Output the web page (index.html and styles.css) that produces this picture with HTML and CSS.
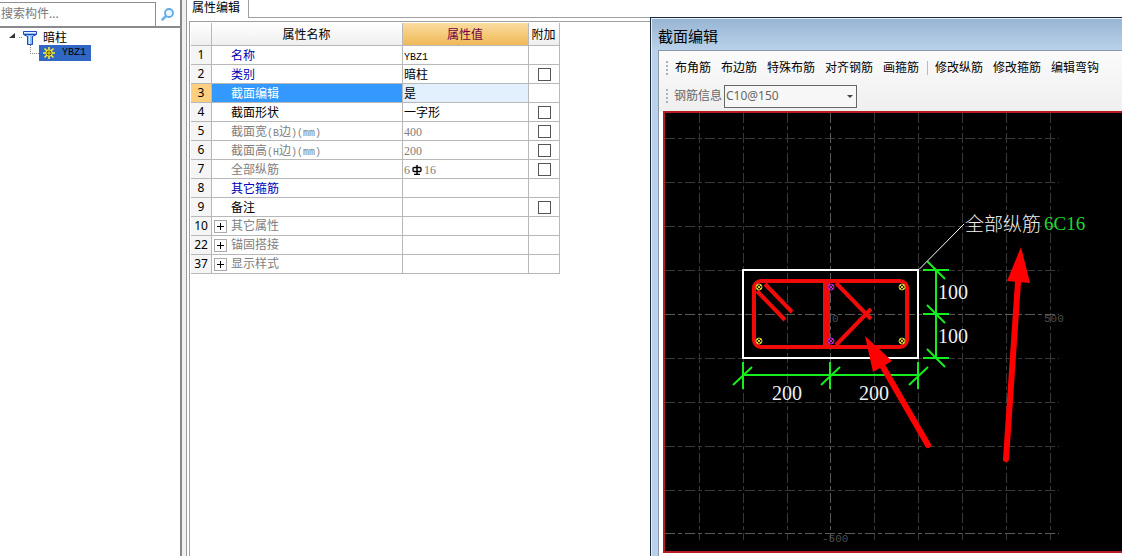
FILE: index.html
```html
<!DOCTYPE html>
<html lang="zh-CN">
<head>
<meta charset="utf-8">
<title>属性编辑</title>
<link rel="stylesheet" href="styles.css">
</head>
<body>
<div class="app">
  <aside class="sidebar">
    <form class="search">
      <input class="search-input" type="text" placeholder="搜索构件..." aria-label="搜索构件">
      <button class="search-button" type="button" aria-label="搜索">
        <svg width="16" height="16" viewBox="0 0 16 16"><path d="M6 10L2.500 13.500" stroke="#6fb4ea" stroke-width="2.600" stroke-linecap="round"/><circle cx="9" cy="7" r="4" fill="#eaf6ff" stroke="#62a9e6" stroke-width="1.800"/></svg>
      </button>
    </form>
    <div class="tree" role="tree">
      <div class="node" role="treeitem">
        <svg width="34" height="16" viewBox="0 0 34 16"><path d="M6 4v5H0z" fill="#333"/><path d="M10 8.500h3" stroke="#888" stroke-dasharray="1 1"/><path d="M14.500 2.500h13v3l-4 2v8h-5v-8l-4-2z" fill="#8fbdf5" stroke="#2348b8"/><path d="M15 3.500h12M20.500 7v8" stroke="#e8f3ff"/><path d="M15 5.500h12" stroke="#2348b8"/></svg>
        <span class="node-text">暗柱</span>
      </div>
      <div class="node child" role="treeitem" aria-selected="true">
        <svg class="branch" width="10" height="16" viewBox="0 0 10 16"><path d="M1.500 0v8M1 8.500h9" fill="none" stroke="#888" stroke-dasharray="1 1"/></svg>
        <span class="selected"><svg width="12" height="12" viewBox="0 0 12 12"><path d="M6 0v12M0 6h12M1.500 1.500l9 9M10.500 1.500l-9 9" stroke="#ffef2a" stroke-width="1.500"/><circle cx="6" cy="6" r="3.500" fill="#ffef2a"/><circle cx="6" cy="6" r="2.500" fill="#34340c"/><path d="M6 4v4M4 6h4" stroke="#ffef2a"/></svg><span class="code">YBZ1</span></span>
      </div>
    </div>
  </aside>
  <div class="splitter"></div>
  <main class="main">
    <div class="tabs"><button class="tab" type="button">属性编辑</button></div>
    <div class="sheet">
      <table class="props">
        <colgroup><col class="c-num"><col class="c-name"><col class="c-value"><col class="c-extra"></colgroup>
        <thead><tr><th></th><th>属性名称</th><th class="active">属性值</th><th>附加</th></tr></thead>
        <tbody>
          <tr><th>1</th><td class="name blue">名称</td><td><span class="code">YBZ1</span></td><td></td></tr>
          <tr><th>2</th><td class="name blue">类别</td><td>暗柱</td><td class="check"><input type="checkbox" aria-label="附加 类别"></td></tr>
          <tr class="current"><th>3</th><td class="name">截面编辑</td><td class="value">是</td><td></td></tr>
          <tr><th>4</th><td class="name">截面形状</td><td>一字形</td><td class="check"><input type="checkbox" aria-label="附加 截面形状"></td></tr>
          <tr class="muted"><th>5</th><td class="name">截面宽<span class="code">(B</span>边<span class="code">)(mm)</span></td><td><span class="digits">400</span></td><td class="check"><input type="checkbox" aria-label="附加 截面宽"></td></tr>
          <tr class="muted"><th>6</th><td class="name">截面高<span class="code">(H</span>边<span class="code">)(mm)</span></td><td><span class="digits">200</span></td><td class="check"><input type="checkbox" aria-label="附加 截面高"></td></tr>
          <tr class="muted"><th>7</th><td class="name">全部纵筋</td><td><span class="digits">6</span><svg class="bar" width="10" height="10" viewBox="0 0 10 10"><path d="M5 0v10M2 9.500h6" stroke="#000" stroke-width="1.500"/><rect x="1" y="2.500" width="8" height="4" rx="1" fill="none" stroke="#000" stroke-width="1.300"/></svg><span class="digits">16</span></td><td class="check"><input type="checkbox" aria-label="附加 全部纵筋"></td></tr>
          <tr><th>8</th><td class="name blue">其它箍筋</td><td></td><td></td></tr>
          <tr><th>9</th><td class="name">备注</td><td></td><td class="check"><input type="checkbox" aria-label="附加 备注"></td></tr>
          <tr class="muted"><th>10</th><td class="group"><button class="expand" type="button" aria-label="展开 其它属性"></button>其它属性</td><td></td><td></td></tr>
          <tr class="muted"><th>22</th><td class="group"><button class="expand" type="button" aria-label="展开 锚固搭接"></button>锚固搭接</td><td></td><td></td></tr>
          <tr class="muted"><th>37</th><td class="group"><button class="expand" type="button" aria-label="展开 显示样式"></button>显示样式</td><td></td><td></td></tr>
        </tbody>
      </table>
    </div>
  </main>

  <section class="window">
    <h1 class="title">截面编辑</h1>
    <div class="client">
      <div class="toolbar">
        <i class="grip"></i>
        <button type="button">布角筋</button>
        <button type="button">布边筋</button>
        <button type="button">特殊布筋</button>
        <button type="button">对齐钢筋</button>
        <button type="button">画箍筋</button>
        <i class="divider"></i>
        <button type="button">修改纵筋</button>
        <button type="button">修改箍筋</button>
        <button type="button">编辑弯钩</button>
      </div>
      <div class="toolbar info">
        <i class="grip"></i>
        <label for="rebar">钢筋信息</label>
        <span class="combo"><select id="rebar"><option>C10@150</option></select></span>
      </div>
      <div class="canvas">
        <svg class="drawing" viewBox="665 113 457 438" preserveAspectRatio="xMinYMin meet">
          <g class="grid">
            <path d="M699.500 113v427M743.500 113v427M787.500 113v427M874.500 113v427M918.500 113v427M962.500 113v427M1006.500 113v427M1050.500 113v427"/>
            <path d="M665 138.500h394M665 182.500h394M665 226.500h394M665 270.500h394M665 358.500h394M665 402.500h394M665 446.500h394M665 490.500h394"/>
            <path class="axis" d="M830.500 113v427M665 314.500h394M665 533.500h394"/>
          </g>
          <g class="scale"><text x="832" y="322">0</text><text x="1044" y="322">500</text><text x="822" y="542">-500</text></g>
          <rect class="outline" x="743" y="270" width="175" height="88"/>
          <path class="leader" d="M919 269.500L964 224"/>
          <g class="stirrup">
            <rect x="754" y="281" width="153" height="66" rx="7"/>
            <path d="M825 283v62M828 283v62"/>
            <path d="M757 291l28 29M765 284l27 28M836 283l35 36M836 345l35-36"/>
          </g>
          <g class="bars">
            <g stroke="#d8d030"><circle cx="759" cy="287" r="3"/><circle cx="902" cy="287" r="3"/><circle cx="759" cy="341" r="3"/><circle cx="902" cy="341" r="3"/><path d="M757 285l4 4M761 285l-4 4M900 285l4 4M904 285l-4 4M757 339l4 4M761 339l-4 4M900 339l4 4M904 339l-4 4"/></g>
            <g stroke="#c21fd6"><circle cx="831" cy="287" r="3"/><circle cx="831" cy="341" r="3"/><path d="M829 285l4 4M833 285l-4 4M829 339l4 4M833 339l-4 4"/></g>
          </g>
          <g class="dims">
            <path d="M743 375h175M743 362v27M830 362v27M918 362v27M733 385l19-18M821 385l19-18M909 385l19-18"/>
            <path d="M936 270v88M923 270h26M923 314h26M923 358h26M927 261l18 18M927 305l18 18M927 349l18 18"/>
          </g>
          <g class="labels">
            <text x="772" y="400">200</text><text x="859" y="400">200</text>
            <text x="938" y="299">100</text><text x="938" y="343">100</text>
            <text class="cjk" x="965" y="231">全部纵筋</text><text class="mark" x="1044" y="230">6C16</text>
          </g>
          <g class="arrows">
            <path d="M928 445L883 367M1006 459L1018 282"/>
            <path class="head" d="M865 336l8 36 19-11zM1021 247l-14 34 23 2z"/>
          </g>
        </svg>
      </div>
    </div>
  </section>
</div>
</body>
</html>
```
FILE: styles.css
```css
* { box-sizing: border-box; }

body {
  margin: 0;
  background: #fff;
  color: #000;
  font: 12px/16px "Noto Sans", "Noto Sans CJK SC", sans-serif;
}

button, input, select {
  margin: 0;
  padding: 0;
  border: 0;
  border-radius: 0;
  background: none;
  color: inherit;
  font: inherit;
}

svg { display: block; flex: none; }

.app {
  position: relative;
  display: flex;
  height: 100vh;
  overflow: hidden;
}

.code { font: 10px/12px "Liberation Mono", monospace; }
.digits { font: 12px/12px "Liberation Serif", serif; }

/* Component tree */
.sidebar {
  flex: none;
  width: 182px;
  border-right: 2px solid #87878c;
}

.search {
  display: flex;
  height: 28px;
  padding-top: 2px;
  border-bottom: 2px solid #8a8a8e;
}

.search-input {
  flex: 1;
  min-width: 0;
  padding: 0 0 2px 1px;
  border: 1px solid #8d8d92;
  border-left: 0;
  border-bottom: 0;
}

.search-input::placeholder { color: #777; opacity: 1; }

.search-button {
  display: grid;
  place-items: center;
  width: 24px;
}

.tree { padding: 1px 0 0 9px; }

.node { display: flex; align-items: center; height: 16px; }
.node-text { padding-top: 1px; line-height: 16px; }
.child { padding-left: 20px; }

.selected {
  display: flex;
  align-items: center;
  gap: 7px;
  height: 16px;
  padding: 0 5px 0 4px;
  background: #3067c4;
}

.splitter {
  flex: none;
  width: 5px;
  background: #f0f0f0;
  border-right: 1px solid #999;
}

/* Property table */
.main {
  flex: 1;
  min-width: 0;
  display: flex;
  flex-direction: column;
}

.tabs { display: flex; height: 18px; }
.tabs::after { content: ""; flex: 1; border-bottom: 1px solid #a0a0a0; }

.tab {
  padding: 0 8px 2px 5px;
  border-right: 1px solid #a0a0a0;
  line-height: 16px;
}

.sheet {
  flex: 1;
  margin: 3px 0 0 2px;
  padding: 1px 0 0 1px;
  border: 1px solid #a0a0a0;
  border-right: 0;
  border-bottom: 0;
}

.props {
  width: 369px;
  table-layout: fixed;
  border-collapse: separate;
  border-spacing: 0;
}

.c-num { width: 21px; }
.c-name { width: 191px; }
.c-value { width: 126px; }
.c-extra { width: 31px; }

.props th, .props td {
  height: 19px;
  padding: 2px 0 0 1px;
  border-right: 1px solid #b8b8b8;
  border-bottom: 1px solid #b8b8b8;
  font-weight: normal;
  line-height: 14px;
  text-align: left;
  white-space: nowrap;
}

.props th { padding: 0; background: #f5f5f5; text-align: center; }
.props thead th { height: 23px; padding: 1px 1px 0 0; background: linear-gradient(#fff, #efefef); }
.props thead .active { background: linear-gradient(#fbdca0, #efb956); color: #700040; }
.props .name { padding-left: 19px; }
.props .group { padding: 0 0 0 2px; }
.props .blue { color: #0000b4; }
.props .muted td { color: #808080; }
.props .current th { background: #ffcf80; }
.props .current .name { background: #3399ff; color: #fff; }
.props .current .value { background: #e2effd; }
.props .check { padding: 0; }

.check input {
  appearance: none;
  display: block;
  width: 13px;
  height: 13px;
  margin: 0 auto;
  border: 1px solid #555;
  background: #fff;
}

.bar { display: inline-block; margin: 0 2px; vertical-align: -1px; }

.expand {
  display: inline-block;
  width: 13px;
  height: 13px;
  margin-right: 4px;
  border: 1px solid #aaa;
  vertical-align: -2px;
  background:
    linear-gradient(#000, #000) center / 7px 1px no-repeat,
    linear-gradient(#000, #000) center / 1px 7px no-repeat,
    #fff;
}

/* Floating section editor */
.window {
  position: absolute;
  top: 17px;
  right: 0;
  bottom: 0;
  left: 650px;
  display: flex;
  flex-direction: column;
  padding-left: 6px;
  border-top: 1px solid #1d2b38;
  border-left: 1px solid #1d2b38;
  background: linear-gradient(#98b4d2, #b9d1ea 32px);
  box-shadow: inset 1px 1px #e6f0fa;
}

.title {
  margin: 0;
  height: 32px;
  padding: 9px 0 0 1px;
  font-size: 15px;
  line-height: 18px;
  font-weight: normal;
}

.client {
  flex: 1;
  display: flex;
  flex-direction: column;
  min-height: 0;
  margin-left: 1px;
  padding: 4px 0 3px 4px;
  border-top: 1px solid #8a98a8;
  border-left: 1px solid #8a98a8;
  background: linear-gradient(#fbfbfb, #efeff0 60px, #fff 62px);
}

.toolbar {
  display: flex;
  align-items: center;
  gap: 10px;
  height: 26px;
  padding-left: 3px;
  white-space: nowrap;
}

.info { gap: 2px; height: 30px; color: #666; }
.info .grip { margin-right: 4px; }

.grip {
  width: 2px;
  height: 14px;
  margin-right: -3px;
  background: repeating-linear-gradient(#a8b4bd 0 2px, transparent 2px 4px);
}

.divider {
  width: 1px;
  height: 14px;
  margin: 0 -3px 0 -2px;
  background: #bbb;
}

.combo {
  position: relative;
  width: 133px;
}

.combo::after {
  content: "";
  position: absolute;
  top: 10px;
  right: 4px;
  border: 3px solid transparent;
  border-top-color: #444;
}

.combo select {
  appearance: none;
  display: block;
  width: 100%;
  height: 23px;
  padding: 0 0 0 1px;
  border: 1px solid #666;
  background: #f7f7f7;
}

.canvas {
  flex: 1;
  min-height: 0;
  border: 2px solid #b81c22;
  border-right: 0;
  background: #000;
}

.drawing { width: 100%; height: 100%; }
.grid { fill: none; stroke: #383838; stroke-dasharray: 10 3 4 3; }
.grid .axis { stroke: #595959; }
.scale { fill: #4c4c4c; font: 11px "Liberation Mono", monospace; }
.outline { fill: none; stroke: #fff; stroke-width: 2; }
.leader { stroke: #fff; }
.stirrup { fill: none; stroke: #f00a0a; stroke-width: 4; }
.bars { fill: #221c00; }
.dims { fill: none; stroke: #14ee1e; stroke-width: 2; }
.labels { fill: #f2f2f2; font: 20px "Liberation Serif", serif; }
.labels .cjk { font: 19px "Noto Sans CJK SC", sans-serif; font-weight: 300; }
.labels .mark { fill: #20d830; font-size: 19px; }
.arrows { fill: none; stroke: #f00; stroke-width: 6; stroke-linecap: round; }
.arrows .head { fill: #f00; stroke: none; }
```
